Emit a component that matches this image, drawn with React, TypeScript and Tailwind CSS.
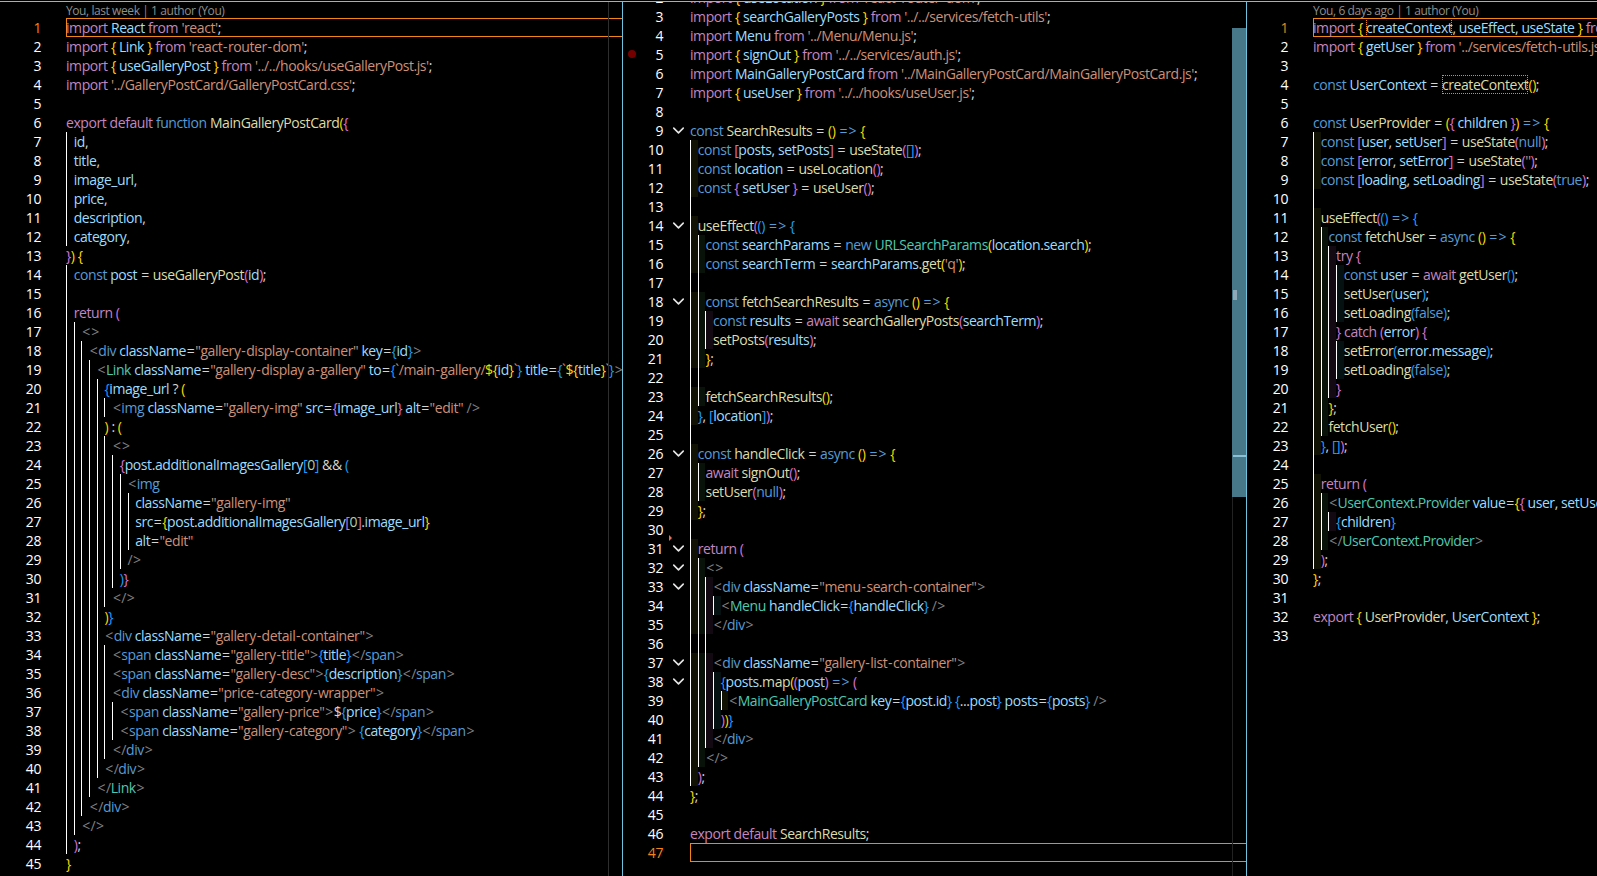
import { ChevronDown } from 'lucide-react'
import clsx from 'clsx'

const colors: Record<string, string> = {
  k: 'text-[#c586c0]',
  c: 'text-[#569cd6]',
  f: 'text-[#dcdcaa]',
  v: 'text-[#9cdcfe]',
  s: 'text-[#ce9178]',
  t: 'text-[#4ec9b0]',
  g: 'text-[#808080]',
  w: 'text-[#d4d4d4]',
  n: 'text-[#b5cea8]',
  y: 'text-[#ffd700]',
  p: 'text-[#da70d6]',
  b: 'text-[#179fff]',
  x: 'inline-block h-[19px] text-[#9cdcfe] outline-1 outline-dotted -outline-offset-1 outline-[#f38518]',
  z: 'inline-block h-[19px] text-[#dcdcaa] outline-1 outline-dotted -outline-offset-1 outline-[#f38518]',
}

const tints = ['bg-[#121204]', 'bg-[#091209]', 'bg-[#120912]', 'bg-[#051010]']

type Line = [number, string]

// each token is ~ + colour key + text
const cardLines: Line[] = [
  [0, "~kimport ~vReact ~kfrom ~s'react'~w;"],
  [0, "~kimport ~y{ ~vLink ~y} ~kfrom ~s'react-router-dom'~w;"],
  [0, "~kimport ~y{ ~vuseGalleryPost ~y} ~kfrom ~s'../../hooks/useGalleryPost.js'~w;"],
  [0, "~kimport ~s'../GalleryPostCard/GalleryPostCard.css'~w;"],
  [0, ''],
  [0, '~kexport default ~cfunction ~fMainGalleryPostCard~y(~p{'],
  [1, '~vid~w,'],
  [1, '~vtitle~w,'],
  [1, '~vimage_url~w,'],
  [1, '~vprice~w,'],
  [1, '~vdescription~w,'],
  [1, '~vcategory~w,'],
  [0, '~p}~y) {'],
  [1, '~cconst ~vpost ~w= ~fuseGalleryPost~p(~vid~p)~w;'],
  [1, ''],
  [1, '~kreturn ~p('],
  [2, '~g<>'],
  [3, '~g<~cdiv ~vclassName~w=~s"gallery-display-container" ~vkey~w=~b{~vid~b}~g>'],
  [4, '~g<~tLink ~vclassName~w=~s"gallery-display a-gallery" ~vto~w=~b{~s`/main-gallery/~y${~vid~y}~s`~b} ~vtitle~w=~b{~s`~y${~vtitle~y}~s`~b}~g>'],
  [5, '~b{~vimage_url ~w? ~y('],
  [6, '~g<~cimg ~vclassName~w=~s"gallery-img" ~vsrc~w=~p{~vimage_url~p} ~valt~w=~s"edit" ~g/>'],
  [5, '~y) ~w: ~y('],
  [6, '~g<>'],
  [7, '~p{~vpost~w.~vadditionalImagesGallery~b[~n0~b] ~w&& ~b('],
  [8, '~g<~cimg'],
  [9, '~vclassName~w=~s"gallery-img"'],
  [9, '~vsrc~w=~y{~vpost~w.~vadditionalImagesGallery~p[~n0~p]~w.~vimage_url~y}'],
  [9, '~valt~w=~s"edit"'],
  [8, '~g/>'],
  [7, '~b)~p}'],
  [6, '~g</>'],
  [5, '~y)~b}'],
  [5, '~g<~cdiv ~vclassName~w=~s"gallery-detail-container"~g>'],
  [6, '~g<~cspan ~vclassName~w=~s"gallery-title"~g>~b{~vtitle~b}~g</~cspan~g>'],
  [6, '~g<~cspan ~vclassName~w=~s"gallery-desc"~g>~b{~vdescription~b}~g</~cspan~g>'],
  [6, '~g<~cdiv ~vclassName~w=~s"price-category-wrapper"~g>'],
  [7, '~g<~cspan ~vclassName~w=~s"gallery-price"~g>~w$~b{~vprice~b}~g</~cspan~g>'],
  [7, '~g<~cspan ~vclassName~w=~s"gallery-category"~g> ~b{~vcategory~b}~g</~cspan~g>'],
  [6, '~g</~cdiv~g>'],
  [5, '~g</~cdiv~g>'],
  [4, '~g</~tLink~g>'],
  [3, '~g</~cdiv~g>'],
  [2, '~g</>'],
  [1, '~p)~w;'],
  [0, '~y}'],
]

const searchLines: Line[] = [
  [0, "~kimport ~y{ ~vuseLocation ~y} ~kfrom ~s'react-router-dom'~w;"],
  [0, "~kimport ~y{ ~vsearchGalleryPosts ~y} ~kfrom ~s'../../services/fetch-utils'~w;"],
  [0, "~kimport ~vMenu ~kfrom ~s'../Menu/Menu.js'~w;"],
  [0, "~kimport ~y{ ~vsignOut ~y} ~kfrom ~s'../../services/auth.js'~w;"],
  [0, "~kimport ~vMainGalleryPostCard ~kfrom ~s'../MainGalleryPostCard/MainGalleryPostCard.js'~w;"],
  [0, "~kimport ~y{ ~vuseUser ~y} ~kfrom ~s'../../hooks/useUser.js'~w;"],
  [0, ''],
  [0, '~cconst ~fSearchResults ~w= ~y() ~c=> ~y{'],
  [1, '~cconst ~p[~vposts~w, ~vsetPosts~p] ~w= ~fuseState~p(~b[]~p)~w;'],
  [1, '~cconst ~vlocation ~w= ~fuseLocation~p()~w;'],
  [1, '~cconst ~p{ ~vsetUser ~p} ~w= ~fuseUser~p()~w;'],
  [1, ''],
  [1, '~fuseEffect~p(~b() ~c=> ~b{'],
  [2, '~cconst ~vsearchParams ~w= ~cnew ~tURLSearchParams~y(~vlocation~w.~vsearch~y)~w;'],
  [2, "~cconst ~vsearchTerm ~w= ~vsearchParams~w.~fget~y(~s'q'~y)~w;"],
  [2, ''],
  [2, '~cconst ~ffetchSearchResults ~w= ~casync ~y() ~c=> ~y{'],
  [3, '~cconst ~vresults ~w= ~kawait ~fsearchGalleryPosts~p(~vsearchTerm~p)~w;'],
  [3, '~fsetPosts~p(~vresults~p)~w;'],
  [2, '~y}~w;'],
  [2, ''],
  [2, '~ffetchSearchResults~y()~w;'],
  [1, '~b}~w, ~b[~vlocation~b]~p)~w;'],
  [1, ''],
  [1, '~cconst ~fhandleClick ~w= ~casync ~y() ~c=> ~y{'],
  [2, '~kawait ~fsignOut~p()~w;'],
  [2, '~fsetUser~p(~cnull~p)~w;'],
  [1, '~y}~w;'],
  [1, ''],
  [1, '~kreturn ~p('],
  [2, '~g<>'],
  [3, '~g<~cdiv ~vclassName~w=~s"menu-search-container"~g>'],
  [4, '~g<~tMenu ~vhandleClick~w=~b{~vhandleClick~b} ~g/>'],
  [3, '~g</~cdiv~g>'],
  [3, ''],
  [3, '~g<~cdiv ~vclassName~w=~s"gallery-list-container"~g>'],
  [4, '~b{~vposts~w.~fmap~y(~p(~vpost~p) ~c=> ~p('],
  [5, '~g<~tMainGalleryPostCard ~vkey~w=~b{~vpost~w.~vid~b} ~b{~w...~vpost~b} ~vposts~w=~b{~vposts~b} ~g/>'],
  [4, '~p)~y)~b}'],
  [3, '~g</~cdiv~g>'],
  [2, '~g</>'],
  [1, '~p)~w;'],
  [0, '~y}~w;'],
  [0, ''],
  [0, '~kexport default ~fSearchResults~w;'],
  [0, ''],
]

const contextLines: Line[] = [
  [0, "~kimport ~y{ ~xcreateContext~w, ~vuseEffect~w, ~vuseState ~y} ~kfrom ~s'react'~w;"],
  [0, "~kimport ~y{ ~vgetUser ~y} ~kfrom ~s'../services/fetch-utils.js'~w;"],
  [0, ''],
  [0, '~cconst ~vUserContext ~w= ~zcreateContext~y()~w;'],
  [0, ''],
  [0, '~cconst ~fUserProvider ~w= ~y(~p{ ~vchildren ~p}~y) ~c=> ~y{'],
  [1, '~cconst ~p[~vuser~w, ~vsetUser~p] ~w= ~fuseState~p(~cnull~p)~w;'],
  [1, "~cconst ~p[~verror~w, ~vsetError~p] ~w= ~fuseState~p(~s''~p)~w;"],
  [1, '~cconst ~p[~vloading~w, ~vsetLoading~p] ~w= ~fuseState~p(~ctrue~p)~w;'],
  [1, ''],
  [1, '~fuseEffect~p(~b() ~c=> ~b{'],
  [2, '~cconst ~ffetchUser ~w= ~casync ~y() ~c=> ~y{'],
  [3, '~ktry ~p{'],
  [4, '~cconst ~vuser ~w= ~kawait ~fgetUser~b()~w;'],
  [4, '~fsetUser~b(~vuser~b)~w;'],
  [4, '~fsetLoading~b(~cfalse~b)~w;'],
  [3, '~p} ~kcatch ~p(~verror~p) {'],
  [4, '~fsetError~b(~verror~w.~vmessage~b)~w;'],
  [4, '~fsetLoading~b(~cfalse~b)~w;'],
  [3, '~p}'],
  [2, '~y}~w;'],
  [2, '~ffetchUser~y()~w;'],
  [1, '~b}~w, ~b[]~p)~w;'],
  [1, ''],
  [1, '~kreturn ~p('],
  [2, '~g<~tUserContext.Provider ~vvalue~w=~y{~p{ ~vuser~w, ~vsetUser ~p}~y}~g>'],
  [3, '~b{~vchildren~b}'],
  [2, '~g</~tUserContext.Provider~g>'],
  [1, '~p)~w;'],
  [0, '~y}~w;'],
  [0, ''],
  [0, '~kexport ~y{ ~fUserProvider~w, ~vUserContext ~y}~w;'],
  [0, ''],
]

// these glyphs run narrow in Open Sans, pad them out a bit
function Token({ text }: { text: string }) {
  return (
    <>
      {text.split(/([-=<>])/).map((chunk, i) =>
        i % 2 ? <span key={i} className="px-[0.8px]">{chunk}</span> : chunk,
      )}
    </>
  )
}

function Code({ source }: { source: string }) {
  return (
    <span className="whitespace-pre">
      {source.split('~').filter(Boolean).map((part, i) => (
        <span key={i} className={colors[part[0]]}><Token text={part.slice(1)} /></span>
      ))}
    </span>
  )
}

function Pane({ lines, first, active, folds = [], tinted = false, breakpoint, marker, numberWidth = 'w-[41px]', foldWidth = 'w-[25px]', className }: {
  lines: Line[]
  first: number
  active: number
  folds?: number[]
  tinted?: boolean
  breakpoint?: number
  marker?: number
  numberWidth?: string
  foldWidth?: string
  className?: string
}) {
  return (
    <div className={clsx('flex flex-col', className)}>
      {lines.map(([depth, source], i) => {
        const n = first + i
        return (
          <div key={n} className="flex h-[19px] flex-none leading-[19px]">
            <span className={clsx('relative flex-none text-right', numberWidth, n === active ? 'text-[#f38518]' : 'text-white')}>
              {n === breakpoint && <span className="absolute left-[5px] top-[5px] h-[8px] w-[8px] rounded-full bg-[#750000]" />}
              {n}
            </span>
            <span className={clsx('relative flex flex-none items-center pl-[6px] text-[#e6e6e6]', foldWidth)}>
              {folds.includes(n) && <ChevronDown className="flex-none" size={19} strokeWidth={2} />}
              {n === marker && <span className="absolute left-[6px] top-[15px] h-0 w-0 border-y-[3.5px] border-l-[3px] border-y-transparent border-l-[#e8705a]" />}
            </span>
            <div className={clsx('flex min-w-0 flex-1 overflow-hidden', n === active && 'shadow-[inset_1px_0_0_#f38518,inset_0_1px_0_#f38518,inset_0_-1px_0_#f38518]')}>
              {Array.from({ length: depth }, (_, level) => (
                <span key={level} className={clsx('h-full w-[7.7px] flex-none border-l border-white', tinted && source && tints[level % 4])} />
              ))}
              <Code source={source} />
            </div>
          </div>
        )
      })}
    </div>
  )
}

function Lens({ children }: { children: string }) {
  return <div className="h-[16px] flex-none pl-[66px] text-[12px] leading-[18px] text-[#8f8f8f] whitespace-nowrap">{children}</div>
}

export default function App() {
  return (
    <div className="flex h-[876px] w-[1597px] flex-col overflow-hidden bg-black font-['Open_Sans',sans-serif] text-[14px] tracking-[-0.42px]">
      <div className="h-[2px] flex-none border-b border-[#6fc3df]" />
      <div className="flex min-h-0 flex-1">
        <div className="relative flex w-[623px] flex-none flex-col overflow-hidden border-r border-[#6fc3df]">
          <Lens>You, last week | 1 author (You)</Lens>
          <Pane lines={cardLines} first={1} active={1} />
          <div className="absolute inset-y-0 right-[13px] w-px bg-[#2e2e2e]" />
        </div>

        <div className="relative w-[624px] flex-none overflow-hidden border-r border-[#6fc3df]">
          <Pane
            lines={searchLines}
            first={2}
            active={47}
            folds={[9, 14, 18, 26, 31, 32, 33, 37, 38]}
            tinted
            breakpoint={5}
            marker={30}
            numberWidth="w-[40px]"
            foldWidth="w-[27px]"
            className="mt-[-14px]"
          />
          <div className="absolute right-0 top-[26px] h-[469px] w-[14px] bg-[#47788a]">
            <div className="absolute left-[1px] top-[262px] h-[10px] w-[4px] bg-[#8fa9b8]" />
            <div className="absolute left-[1px] right-0 top-[427px] h-[2px] bg-[#8cc0d4]" />
          </div>
          <div className="absolute bottom-0 right-[13px] top-[495px] w-px bg-[#222222]" />
        </div>

        <div className="flex min-w-0 flex-1 flex-col overflow-hidden">
          <Lens>You, 6 days ago | 1 author (You)</Lens>
          <Pane lines={contextLines} first={1} active={1} tinted />
        </div>
      </div>
    </div>
  )
}
